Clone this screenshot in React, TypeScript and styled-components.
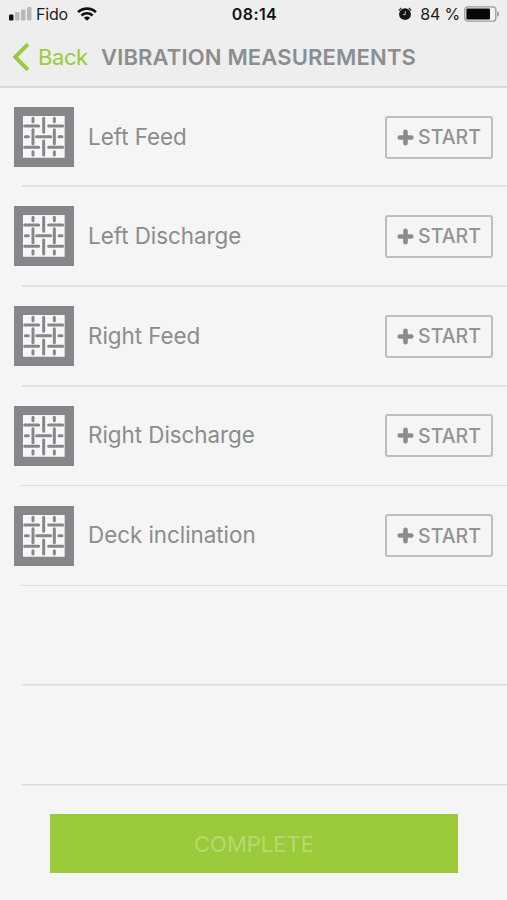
import React from "react";
import styled, { createGlobalStyle } from "styled-components";

const GlobalStyle = createGlobalStyle`
  * { box-sizing: border-box; }
  body { margin: 0; background: #f5f5f5; font-family: Inter, "Liberation Sans", sans-serif; }
`;

const Screen = styled.div`
  width: 507px;
  height: 900px;
  display: flex;
  flex-direction: column;
  overflow: hidden;
  background: #f5f5f5;
`;

const Header = styled.header`
  height: 88px;
  flex: none;
  background: #eeeeee;
  border-bottom: 2px solid #d8d8d8;
`;

const StatusBar = styled.div`
  height: 28px;
  display: grid;
  grid-template-columns: 1fr auto 1fr;
  align-items: center;
  padding: 0 7px 0 9px;
  color: #1c1c1c;
  font-size: 16px;
  line-height: 20px;
  white-space: nowrap;
`;

const StatusGroup = styled.div<{ $end?: boolean }>`
  display: flex;
  align-items: center;
  justify-content: ${(p) => (p.$end ? "flex-end" : "flex-start")};
`;

const Carrier = styled.span`
  margin: 0 9px 0 4px;
  letter-spacing: -0.2px;
`;

const Clock = styled.time`
  font-weight: 600;
  color: #111;
  letter-spacing: 0.4px;
`;

const Percent = styled.span`
  margin: 0 4px 0 8px;
  letter-spacing: -0.2px;
`;

const NavBar = styled.nav`
  height: 57px;
  display: flex;
  align-items: center;
  padding-left: 12px;
`;

const BackButton = styled.button`
  display: flex;
  align-items: center;
  gap: 8px;
  width: 89px;
  padding: 0;
  border: 0;
  background: none;
  color: #9acb3b;
  font: 400 22px/28px Inter, sans-serif;
  letter-spacing: -0.4px;
`;

const Title = styled.h1`
  margin: 0;
  color: #8b8d8f;
  font-size: 22px;
  line-height: 28px;
  font-weight: 600;
  letter-spacing: 0.16px;
  white-space: nowrap;
`;

const List = styled.ul`
  flex: none;
  margin: 0;
  padding: 0;
  list-style: none;
  height: 698px;
  display: grid;
  grid-template-rows: 99px repeat(6, 99.8px);
`;

const Row = styled.li`
  display: flex;
  align-items: center;
  padding: 0 14px 1px 14px;
  background: linear-gradient(#dfdfdf, #dfdfdf) 21px 100% / 100% 1.6px no-repeat;
`;

const Label = styled.span`
  flex: 1;
  margin: -1px 0 0 14px;
  color: #8b8c8e;
  font-size: 22.4px;
  line-height: 28px;
  letter-spacing: -0.03px;
`;

const StartButton = styled.button`
  width: 108px;
  height: 43px;
  display: flex;
  align-items: center;
  justify-content: center;
  gap: 4px;
  padding: 0;
  border: 2px solid #bdbebf;
  border-radius: 3px;
  background: none;
  color: #929395;
  font: 500 19.5px/24px Inter, sans-serif;
`;

const Footer = styled.footer`
  flex: 1;
  padding: 28px 49px 0 50px;
`;

const CompleteButton = styled.button`
  width: 100%;
  height: 59px;
  padding: 0;
  border: 0;
  background: #9aca3a;
  color: #b6d970;
  font: 400 22px/28px Inter, sans-serif;
`;

const SignalIcon = () => (
  <svg width="23" height="14" viewBox="0 0 23 14">
    <rect x="0" y="7.5" width="4.5" height="6" rx="1.2" fill="#111" />
    <rect x="6" y="5" width="4.5" height="8.5" rx="1.2" fill="#b8b8b8" />
    <rect x="12" y="2.5" width="4.5" height="11" rx="1.2" fill="#b8b8b8" />
    <rect x="18" y="0" width="4.5" height="13.5" rx="1.2" fill="#b8b8b8" />
  </svg>
);

const WifiIcon = () => (
  <svg width="20" height="14" viewBox="0 0 20 14" fill="none" stroke="#111">
    <path d="M1.1 5.1C6 .4 14 .4 18.9 5.1" strokeWidth="2.7" />
    <path d="M4.4 8.5c3.2-2.9 8-2.9 11.2 0" strokeWidth="2.5" />
    <path d="M6.8 10.7c1.9-1.6 4.5-1.6 6.4 0L10 13.7z" fill="#111" stroke="none" />
  </svg>
);

const AlarmIcon = () => (
  <svg width="14" height="14" viewBox="0 0 14 14">
    <circle cx="7" cy="7.2" r="5.9" fill="#151515" />
    <path d="M.7 3.6 3.2 1M13.3 3.6 10.8 1" stroke="#333" strokeWidth="1.2" />
    <path d="M7.3 4.2v3.4H4.9" fill="none" stroke="#d0d0d0" strokeWidth="0.9" />
  </svg>
);

const BatteryIcon = () => (
  <svg width="36" height="16" viewBox="0 0 36 16">
    <rect x=".8" y=".8" width="31" height="14.4" rx="3" fill="#f3f3f3" stroke="#9a9a9a" strokeWidth="1.3" />
    <rect x="2.4" y="2.6" width="23.6" height="10.8" rx="1" fill="#080808" />
    <path d="M33.2 5.3c2.5.5 2.5 4.9 0 5.4z" fill="#999" />
  </svg>
);

const ChevronIcon = () => (
  <svg width="18" height="30" viewBox="0 0 18 30" fill="none" stroke="#9acb3b" strokeWidth="3.9">
    <path d="M16 2.2 3.2 15 16 27.8" />
  </svg>
);

const PlusIcon = () => (
  <svg width="17" height="17" viewBox="0 0 17 17" stroke="#8b8c8e" strokeWidth="4.6" strokeLinecap="round">
    <path d="M8.5 2.7v11.6M2.7 8.5h11.6" />
  </svg>
);

const ScreenMeshIcon = () => (
  <svg width="60" height="60" viewBox="0 0 180 180">
    <path fill="#85878a" d="M0 0h180v180H0z" />
    <path fill="#f7f7f7" d="M27 27h125v125H27z" />
    <g stroke="#85878a" strokeWidth="9" strokeLinecap="round">
      <path d="M57 34v10M57 68v42M57 134v10" />
      <path d="M89 34v42M89 102v42" />
      <path d="M121 34v10M121 68v42M121 134v10" />
      <path d="M32 57h42M104 57h42" />
      <path d="M34 89h9M68 89h42M135 89h9" />
      <path d="M32 121h42M104 121h42" />
    </g>
  </svg>
);

const points = ["Left Feed", "Left Discharge", "Right Feed", "Right Discharge", "Deck inclination"];

export default function App() {
  return (
    <>
      <GlobalStyle />
      <Screen>
        <Header>
          <StatusBar>
            <StatusGroup>
              <SignalIcon />
              <Carrier>Fido</Carrier>
              <WifiIcon />
            </StatusGroup>
            <Clock>08:14</Clock>
            <StatusGroup $end>
              <AlarmIcon />
              <Percent>84 %</Percent>
              <BatteryIcon />
            </StatusGroup>
          </StatusBar>
          <NavBar>
            <BackButton>
              <ChevronIcon />
              Back
            </BackButton>
            <Title>VIBRATION MEASUREMENTS</Title>
          </NavBar>
        </Header>
        <List>
          {points.map((name) => (
            <Row key={name}>
              <ScreenMeshIcon />
              <Label>{name}</Label>
              <StartButton>
                <PlusIcon />
                START
              </StartButton>
            </Row>
          ))}
          <Row />
          <Row />
        </List>
        <Footer>
          <CompleteButton>COMPLETE</CompleteButton>
        </Footer>
      </Screen>
    </>
  );
}
